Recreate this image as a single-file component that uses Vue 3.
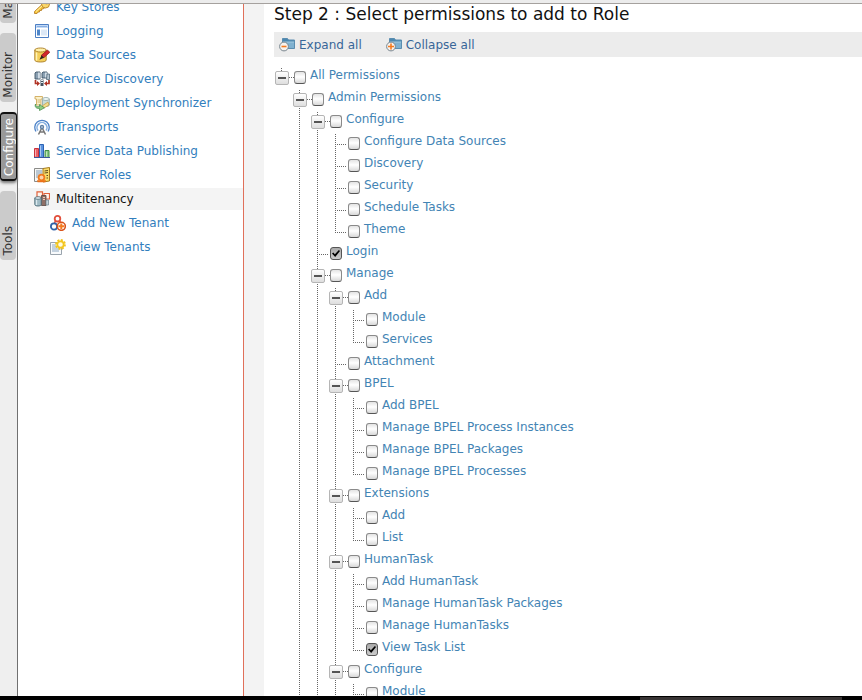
<script setup>
import { computed, reactive } from 'vue'

const tabs = ['Main', 'Monitor', 'Configure', 'Tools']

const menu = [
  { label: 'Key Stores', icon: 'key' },
  { label: 'Logging', icon: 'log' },
  { label: 'Data Sources', icon: 'data' },
  { label: 'Service Discovery', icon: 'discovery' },
  { label: 'Deployment Synchronizer', icon: 'sync' },
  { label: 'Transports', icon: 'transport' },
  { label: 'Service Data Publishing', icon: 'chart' },
  { label: 'Server Roles', icon: 'roles' },
  { label: 'Multitenancy', icon: 'tenancy', heading: true },
  { label: 'Add New Tenant', icon: 'tenant', sub: true },
  { label: 'View Tenants', icon: 'view', sub: true }
]

const leaf = (label, checked = false) => ({ label, checked })
// "more" marks a branch whose sibling line runs on below it
const branch = (label, children, more = false) => ({ label, checked: false, open: true, children, more })

const root = reactive([
  branch('All Permissions', [
    branch('Admin Permissions', [
      branch('Configure', [
        leaf('Configure Data Sources'),
        leaf('Discovery'),
        leaf('Security'),
        leaf('Schedule Tasks'),
        leaf('Theme')
      ]),
      leaf('Login', true),
      branch('Manage', [
        branch('Add', [leaf('Module'), leaf('Services')]),
        leaf('Attachment'),
        branch('BPEL', [
          leaf('Add BPEL'),
          leaf('Manage BPEL Process Instances'),
          leaf('Manage BPEL Packages'),
          leaf('Manage BPEL Processes')
        ]),
        branch('Extensions', [leaf('Add'), leaf('List')]),
        branch('HumanTask', [
          leaf('Add HumanTask'),
          leaf('Manage HumanTask Packages'),
          leaf('Manage HumanTasks'),
          leaf('View Task List', true)
        ]),
        branch('Configure', [leaf('Module')], true)
      ], true)
    ], true)
  ])
])

function flatten(nodes, lines, path) {
  return nodes.flatMap((node, i) => {
    const next = i < nodes.length - 1 || !!node.more
    const id = `${path}-${i}`
    const row = { node, id, lines, next, first: i === 0 }
    const below = node.children && node.open ? flatten(node.children, [...lines, next], id) : []
    return [row, ...below]
  })
}
const rows = computed(() => flatten(root, [], 'perm'))

function setOpen(nodes, open) {
  nodes.forEach((n) => {
    if (n.children) {
      n.open = open
      setOpen(n.children, open)
    }
  })
}
</script>

<template>
  <div class="page">
    <div class="top-edge"></div>
    <div class="body">
      <div class="rail">
        <button v-for="t in tabs" :key="t" type="button" class="tab" :class="{ active: t === 'Configure' }">
          <span>{{ t }}</span>
        </button>
      </div>

      <nav class="side">
        <ul class="menu">
          <li v-for="m in menu" :key="m.label" :class="{ heading: m.heading, sub: m.sub }">
            <svg class="icon" viewBox="0 0 16 16" aria-hidden="true">
              <g v-if="m.icon === 'key'">
                <path d="M.5 12.500l7.500-7 3 3-2 1.500H7.500v1.500H5.500V13H4l-1 1.500H.5z" fill="#f8c83f" stroke="#b9822a" stroke-width=".9" />
                <circle cx="11.500" cy="5" r="4" fill="#fad76a" stroke="#b9822a" stroke-width=".9" />
                <circle cx="12.500" cy="4" r="1.200" fill="#fff" stroke="#b9822a" stroke-width=".6" />
                <path d="M2 12.500l6-5.500" stroke="#fff0b0" />
              </g>
              <g v-else-if="m.icon === 'log'">
                <path d="M1.500 1.500h13v13h-13z" fill="#fff" stroke="#4d7fc4" />
                <path d="M2 2h12v3H2z" fill="#c3d9f5" />
                <path d="M3 3.500h10" stroke="#87afe3" />
                <path d="M3 6.500h3v6H3z" fill="#4f86c9" />
                <path d="M7 6.500h6v6H7z" fill="#dce8f6" />
              </g>
              <g v-else-if="m.icon === 'data'">
                <path d="M.8 3v10c0 1.200 2 2 5.700 2s5.700-.8 5.700-2V3z" fill="#f4cf5a" stroke="#a97a22" stroke-width=".9" />
                <path d="M2.500 5.500v8" stroke="#fff2b5" stroke-width="1.500" />
                <ellipse cx="6.500" cy="3" rx="5.700" ry="2" fill="#fff0a9" stroke="#a97a22" stroke-width=".9" />
                <path d="M13.500 3l2.300 2.300-6 5.500-2.500-2.500z" fill="#d3252c" stroke="#7d1818" stroke-width=".7" />
                <path d="M7.500 8.300l2.500 2.500-4.500 2z" fill="#2b2320" />
              </g>
              <g v-else-if="m.icon === 'discovery'">
                <path d="M2 1h4v7H1V2zM9 1h4v6H8V2z" fill="#8ba0b2" stroke="#3f5668" stroke-width=".9" />
                <path d="M5 1.500v6M12 1.500v5" stroke="#e9f1f7" stroke-width="1.500" />
                <path d="M13 3h2.500v5.500h-3z" fill="#b4c3cf" stroke="#52697b" stroke-width=".8" />
                <path d="M1.500 9v3.500h2M15 9v3.500h-2" fill="none" stroke="#b03325" stroke-width="1.700" />
                <path d="M3 10l3 2.500L3 15zM13 10l-3 2.500 3 2.500z" fill="#b03325" />
                <path d="M6.500 8.500h3v6.500h-3z" fill="#45525e" />
                <path d="M7 9.500h2M7 11.500h2" stroke="#dfe7ed" />
              </g>
              <g v-else-if="m.icon === 'sync'">
                <path d="M1 1.500h7.500V4H7v6H2.500V4H1z" fill="#faf1cb" stroke="#d0a95a" stroke-width=".9" />
                <path d="M3.500 5h3M3.500 7h3" stroke="#d8b66e" />
                <path d="M8.500 4v6c0 2 6.800 2 6.800 0V4z" fill="#c7dcd8" stroke="#8ba5a5" stroke-width=".8" />
                <ellipse cx="11.900" cy="4" rx="3.400" ry="1.500" fill="#eef6f4" stroke="#8ba5a5" stroke-width=".8" />
                <path d="M8 11l6-4 1 3-5 3z" fill="#f3dc8c" stroke="#c7a14a" stroke-width=".8" />
                <path d="M1.500 9c0 2 1 3 4 2.700V9.500l5 3.300-5 2.700v-2C2 13.500.5 12 1.500 9z" fill="#8fcf83" stroke="#4b9150" stroke-width=".8" />
              </g>
              <g v-else-if="m.icon === 'transport'">
                <g fill="none">
                  <path d="M2 12.500a7.200 7.200 0 1 1 12 0" stroke="#4c82c8" stroke-width="1.300" />
                  <path d="M4 11.500a5 5 0 1 1 8 0" stroke="#86afe0" stroke-width="1.600" />
                  <path d="M8 8.500l-3.500 7M8 8.500l3.500 7M5.500 13h5" stroke="#777" stroke-width="1.500" />
                </g>
                <circle cx="8" cy="8" r="2.200" fill="#5f7fa3" />
                <circle cx="8" cy="8" r=".8" fill="#dce8f6" />
              </g>
              <g v-else-if="m.icon === 'chart'">
                <path d="M.5 5.500h4v9h-4z" fill="#ed6268" stroke="#c9333d" />
                <path d="M5.500 1.500h4v13h-4z" fill="#5b93df" stroke="#2c63b4" />
                <path d="M11 7.500h4v7h-4z" fill="#86c982" stroke="#438d47" />
                <path d="M1.500 6.500v7M6.500 2.500v11M12.500 8.500v5" stroke="#fff" opacity=".5" />
                <path d="M0 14.500h16" stroke="#3a579a" />
              </g>
              <g v-else-if="m.icon === 'roles'">
                <path d="M.5 1.500h9v13h-9z" fill="#f6f6f4" stroke="#8b8b88" />
                <path d="M2 4h6M2 6h6M2 8h3M2 10h2" stroke="#7c99b3" />
                <path d="M9 1.500l6.500-1v13.500l-6.500 1z" fill="#f9dc69" stroke="#a67a1d" />
                <path d="M10.500 4l3.500-.5M10.500 6l3.500-.5M12.500 8.500h1.500M12.500 11h1.500" stroke="#5f4b20" />
                <circle cx="7.500" cy="10.500" r="2.900" fill="#fbd3ac" stroke="#f07a1c" stroke-width="1.800" />
                <path d="M3.500 14.500h8M4 13v1.500M11 13v1.500" stroke="#ec7019" stroke-width="1.400" />
              </g>
              <g v-else-if="m.icon === 'tenancy'">
                <path d="M3 .8h5.500v5.500H3z" fill="#fff2ea" stroke="#e0613b" stroke-width="1.200" />
                <path d="M10 2.500h5.500V8H10z" fill="#fff2ea" stroke="#e0613b" stroke-width="1.200" />
                <path d="M7.500 4.500h4.500v10H7.500z" fill="#8f6f66" stroke="#57453f" stroke-width=".8" />
                <path d="M9 6.500h2M9 8.500h2" stroke="#f0c5b3" />
                <path d="M12 9h2.500v5H12z" fill="#c5d3da" stroke="#6c828c" stroke-width=".7" />
                <path d="M.8 7v6.500c0 2 6.400 2 6.400 0V7z" fill="#9fbac4" stroke="#4c6a76" stroke-width=".9" />
                <path d="M2.500 8.500v5.500" stroke="#dbe9ee" stroke-width="1.300" />
                <ellipse cx="4" cy="7" rx="3.200" ry="1.300" fill="#e1eef2" stroke="#4c6a76" stroke-width=".8" />
              </g>
              <g v-else-if="m.icon === 'tenant'">
                <path d="M5.500 6l-1.500 3M9.500 6l1.500 2.500" stroke="#e2503d" stroke-width="1.600" />
                <circle cx="7.500" cy="3.700" r="2.800" fill="#fff" stroke="#e2503d" stroke-width="1.800" />
                <circle cx="4" cy="11.500" r="3.100" fill="#fff" stroke="#2f62a8" stroke-width="1.800" />
                <circle cx="11.300" cy="11.300" r="4" fill="#fff" stroke="#d9531c" stroke-width="1.600" />
                <path d="M11.300 8.500v5.600M8.500 11.300h5.600" stroke="#f47b20" stroke-width="2" />
              </g>
              <g v-else>
                <path d="M.5 3.500h11v12H.5z" fill="#f8fafc" stroke="#9aa4ad" />
                <path d="M2 6h4M2 8h5M2 10h7M2 12h7" stroke="#8fa9c2" />
                <circle cx="10.500" cy="5.500" r="4.500" fill="none" stroke="#f3c61e" stroke-width="1.800" stroke-dasharray="2 1.500" />
                <circle cx="10.500" cy="5.500" r="3.200" fill="#fffbe0" stroke="#f3c61e" stroke-width="1.800" />
              </g>
            </svg>
            <span v-if="m.heading">{{ m.label }}</span>
            <a v-else href="#">{{ m.label }}</a>
          </li>
        </ul>
      </nav>

      <main class="main">
        <h2>Step 2 : Select permissions to add to Role</h2>
        <div class="toolbar">
          <button v-for="t in ['Expand all', 'Collapse all']" :key="t" type="button" @click="setOpen(root, t === 'Expand all')">
            <svg class="icon" viewBox="0 0 16 16" aria-hidden="true">
              <path d="M3.500 3V1.500h5l1 1.500H15.500v8.500H3.500z" fill="#4d88b0" stroke="#5a8db0" />
              <path d="M4 5h11v6H4z" fill="#7fb1d0" />
              <path d="M4 5h11" stroke="#a5cbe0" />
              <circle cx="5" cy="9.500" r="4.400" fill="#f7f3ee" stroke="#77858e" />
              <path :d="t === 'Expand all' ? 'M2.500 9.500h5' : 'M2 9.500h6M5 6.500v6'" stroke="#f47a1f" stroke-width="1.600" />
            </svg>
            {{ t }}
          </button>
        </div>

        <ul class="tree">
          <li v-for="r in rows" :key="r.id">
            <svg v-for="(on, k) in r.lines" :key="k" class="guide" viewBox="0 0 18 22" aria-hidden="true">
              <path v-if="on" d="M7.500 0V22" />
            </svg>
            <span class="joint">
              <svg class="guide wide" viewBox="0 0 20 22" aria-hidden="true">
                <path :d="`M7.500 ${r.first ? 4 : 0}V${r.next ? 22 : r.node.children ? 8 : 15}`" />
                <path v-if="r.node.children" d="M15 13.500H20" />
                <path v-else d="M7 14.500H19" />
              </svg>
              <button
                v-if="r.node.children"
                type="button"
                class="toggle"
                :aria-label="r.node.label"
                :aria-expanded="r.node.open"
                @click="r.node.open = !r.node.open"
              >
                <svg viewBox="0 0 12 12" aria-hidden="true">
                  <path :d="r.node.open ? 'M2 6H10' : 'M2 6H10M6 2V10'" stroke="#555" stroke-width="2" />
                </svg>
              </button>
            </span>
            <input :id="r.id" v-model="r.node.checked" type="checkbox" />
            <label :for="r.id">{{ r.node.label }}</label>
          </li>
        </ul>
      </main>
    </div>
    <div class="bottom-edge"><div class="thumb"></div></div>
  </div>
</template>

<style>
body {
  background: #fff;
}
</style>

<style scoped>
.page {
  display: flex;
  flex-direction: column;
  height: 100vh;
  overflow: hidden;
  font: 12px/22px "DejaVu Sans", sans-serif;
}
.page * {
  box-sizing: border-box;
}
button {
  font: inherit;
  padding: 0;
  border: 0;
  background: none;
}
ul {
  list-style: none;
  margin: 0;
  padding: 0;
}
.top-edge {
  flex: none;
  height: 4px;
  background: #ececec;
  border-bottom: 1px solid #a5a19e;
}
.bottom-edge {
  flex: none;
  height: 4px;
  padding: 1px 20px 0 0;
  background: #000;
}
.thumb {
  width: 24%;
  height: 3px;
  margin-left: auto;
  background: #383434;
}
.body {
  display: flex;
  flex: 1;
  min-height: 0;
  overflow: hidden;
}
.rail {
  display: flex;
  flex-direction: column;
  flex: none;
  gap: 10px;
  width: 18px;
  background: #efefef;
  border-right: 1px solid #707070;
}
.tab {
  display: flex;
  align-items: flex-end;
  flex: none;
  width: 16px;
  height: 69px;
  padding-bottom: 4px;
  line-height: 16px;
  color: #333;
  background: #cbcbcb;
  border-radius: 4px;
}
.tab:first-child {
  margin-top: -50px;
}
.tab span {
  writing-mode: vertical-rl;
  transform: rotate(180deg);
}
.tab.active {
  width: 17px;
  padding-bottom: 3px;
  color: #fff;
  background: #999;
  border: 2px solid #111;
  border-left-width: 1px;
  border-right-width: 1px;
  box-shadow: 0 2px 3px #777;
}
.side {
  flex: none;
  width: 226px;
  border-right: 1px solid #e0705a;
}
.menu {
  margin-top: -9px;
}
.menu li {
  display: flex;
  align-items: center;
  gap: 6px;
  height: 24px;
  padding-left: 16px;
}
.menu li.sub {
  padding-left: 32px;
}
.menu li.heading {
  height: 22px;
  margin: 1px 0;
  color: #111;
  background: #f4f4f4;
}
.menu a {
  color: #327ebd;
  text-decoration: none;
}
.icon {
  flex: none;
  width: 16px;
  height: 16px;
}
.main {
  flex: 1;
  min-width: 0;
  padding-left: 10px;
  border-left: 20px solid #f3f3f3;
}
h2 {
  margin: 0 0 8px;
  font-size: 17px;
  font-weight: normal;
  line-height: 20px;
  color: #111;
}
.toolbar {
  display: flex;
  gap: 24px;
  height: 25px;
  padding-left: 5px;
  margin-bottom: 7px;
  background: #ececec;
}
.toolbar button {
  display: flex;
  align-items: center;
  gap: 4px;
  color: #386698;
}
.tree li {
  display: flex;
  height: 22px;
}
.guide {
  flex: none;
  width: 18px;
  height: 22px;
}
.guide path {
  fill: none;
  stroke: #666;
  stroke-dasharray: 1 1;
  shape-rendering: crispEdges;
}
.joint {
  position: relative;
  flex: none;
  width: 20px;
}
.wide {
  display: block;
  width: 20px;
}
.toggle {
  position: absolute;
  top: 7px;
  left: 1px;
  width: 14px;
  height: 14px;
  border: 1px solid #b5b5b5;
  border-radius: 2px;
  background: linear-gradient(#fff, #dedede);
}
.toggle svg {
  display: block;
  width: 12px;
  height: 12px;
}
input {
  appearance: none;
  flex: none;
  width: 12px;
  height: 13px;
  margin: 7px 4px 0 0;
  border: 1px solid #8a8a8a;
  border-bottom-color: #555;
  border-radius: 3px;
  background: linear-gradient(#e4e4e4, #fff 45%, #d8d8d8);
}
input:checked {
  border-color: #555;
  background: linear-gradient(#aaa, #ccc);
}
input:checked::before {
  content: "";
  display: block;
  width: 8px;
  height: 7px;
  margin: 2px 1px;
  background: #000;
  clip-path: polygon(0 50%, 16% 36%, 36% 62%, 86% 0, 100% 14%, 40% 100%);
}
label {
  color: #4384b4;
  white-space: nowrap;
}
</style>
